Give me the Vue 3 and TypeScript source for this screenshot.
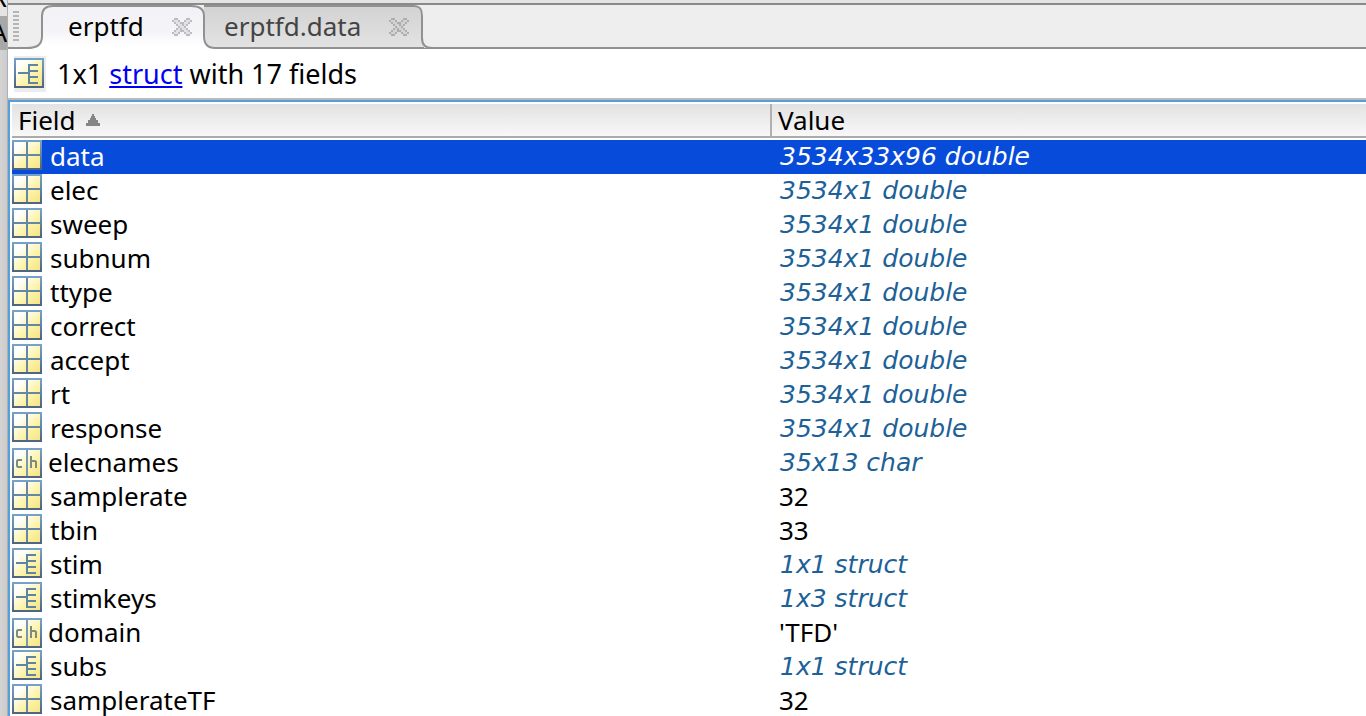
<script setup lang="ts">
import { ref } from 'vue'

type Kind = 'matrix' | 'char' | 'struct'
interface Field {
  name: string
  value: string
  kind: Kind
  summary: boolean
}

const matrix = (name: string, value: string, summary = true): Field => ({ name, value, kind: 'matrix', summary })

const fields: Field[] = [
  matrix('data', '3534x33x96 double'),
  matrix('elec', '3534x1 double'),
  matrix('sweep', '3534x1 double'),
  matrix('subnum', '3534x1 double'),
  matrix('ttype', '3534x1 double'),
  matrix('correct', '3534x1 double'),
  matrix('accept', '3534x1 double'),
  matrix('rt', '3534x1 double'),
  matrix('response', '3534x1 double'),
  { name: 'elecnames', value: '35x13 char', kind: 'char', summary: true },
  matrix('samplerate', '32', false),
  matrix('tbin', '33', false),
  { name: 'stim', value: '1x1 struct', kind: 'struct', summary: true },
  { name: 'stimkeys', value: '1x3 struct', kind: 'struct', summary: true },
  { name: 'domain', value: "'TFD'", kind: 'char', summary: false },
  { name: 'subs', value: '1x1 struct', kind: 'struct', summary: true },
  matrix('samplerateTF', '32', false),
]

const selected = ref('data')

// Close mark on a 10x9 grid: "x" is the outline, "o" the inside.
const closeBitmap = [
  '.xx....xx.',
  'xoox..xoox',
  '.xooxxoox.',
  '..xooxox..',
  '...xoox...',
  '..xoxoox..',
  '.xooxxoox.',
  'xoox..xoox',
  '.xx....xx.',
]
const cells = (mark: string): string =>
  closeBitmap
    .flatMap((row, y) => [...row].map((c, x) => (c === mark ? `M${x} ${y}h1v1h-1z` : '')))
    .join('')
const closeOutline = cells('x')
const closeInside = cells('o')
</script>

<template>
  <div class="window">
    <svg class="defs" width="0" height="0" aria-hidden="true">
      <defs>
        <linearGradient id="cell" x1="0" y1="0" x2="1" y2="1">
          <stop offset="0.2" stop-color="#ffffff" />
          <stop offset="0.6" stop-color="#fdf3a8" />
          <stop offset="1" stop-color="#f5e382" />
        </linearGradient>
        <linearGradient id="edge" x1="0" y1="0" x2="0" y2="1">
          <stop offset="0" stop-color="#76a1c8" />
          <stop offset="1" stop-color="#4e6584" />
        </linearGradient>
        <linearGradient id="front" x1="0" y1="0" x2="0" y2="1">
          <stop offset="0" stop-color="#f2f2f6" />
          <stop offset="0.6" stop-color="#f5f5f8" />
          <stop offset="0.9" stop-color="#ffffff" />
        </linearGradient>
        <linearGradient id="back" x1="0" y1="0" x2="0" y2="1">
          <stop offset="0" stop-color="#d2d2d2" />
          <stop offset="1" stop-color="#e3e3e3" />
        </linearGradient>
      </defs>
    </svg>

    <aside class="behind" aria-hidden="true">
      <span class="behind-top">R</span>
      <span class="behind-bar">A</span>
    </aside>

    <main class="panel">
      <nav class="tabs">
        <span class="grip"></span>
        <button class="tab active" type="button">
          <svg class="shape" width="188" height="45" viewBox="0 0 188 45" aria-hidden="true">
            <path d="M0 43C10 43 15 40 15 31V11C15 4 19 1 26 1H164C172 1 177 4 177 11V31C177 40 181 43 188 43V45H0Z" fill="url(#front)" />
            <path d="M0 43C10 43 15 40 15 31V11C15 4 19 1 26 1H164C172 1 177 4 177 11V31C177 40 181 43 188 43" fill="none" stroke="#919191" stroke-width="2" />
          </svg>
          <span class="label">erptfd</span>
          <svg class="close" width="20" height="18" viewBox="0 0 10 9" shape-rendering="crispEdges" aria-hidden="true">
            <path :d="closeOutline" fill="#bcbcbe" />
            <path :d="closeInside" fill="#e2e2e5" />
          </svg>
        </button>
        <button class="tab" type="button">
          <svg class="shape" width="230" height="45" viewBox="0 0 230 45" aria-hidden="true">
            <path d="M0 1H210C216 1 218 4 218 11V33C218 40 221 43 228 43H10C2 43 0 39 0 31Z" fill="url(#back)" />
            <path d="M-4 1H210C216 1 218 4 218 11V33C218 40 221 43 228 43H230" fill="none" stroke="#919191" stroke-width="2" />
            <path d="M8 43H220" stroke="#919191" stroke-width="2" />
          </svg>
          <span class="label">erptfd.data</span>
          <svg class="close" width="20" height="18" viewBox="0 0 10 9" shape-rendering="crispEdges" aria-hidden="true">
            <path :d="closeOutline" fill="#aeaeae" />
            <path :d="closeInside" fill="#d2d2d2" />
          </svg>
        </button>
      </nav>

      <header class="info">
        <span class="info-icon">
          <svg width="30" height="30" viewBox="0 0 30 30" aria-hidden="true">
            <rect x="1" y="1" width="28" height="28" fill="url(#cell)" stroke="url(#edge)" stroke-width="2" />
            <path d="M4 15H15M24 7H15V25H24M15 13H24M15 19H24" fill="none" stroke="#5f85a5" stroke-width="2" />
          </svg>
        </span>
        <p>1x1 <a href="#struct">struct</a> with 17 fields</p>
      </header>

      <section class="grid">
        <table>
          <colgroup>
            <col class="col-field" />
            <col />
          </colgroup>
          <thead>
            <tr>
              <th scope="col">
                Field<svg class="sort" width="14" height="12" viewBox="0 0 14 12" aria-hidden="true">
                  <path d="M6 0H8V2H9V4H10V6H12V9H14V12H0V9H2V6H4V4H5V2H6Z" fill="#858585" />
                </svg>
              </th>
              <th scope="col">Value</th>
            </tr>
          </thead>
          <tbody>
            <tr
              v-for="field in fields"
              :key="field.name"
              :class="{ selected: selected === field.name }"
              @click="selected = field.name"
            >
              <td>
                <div class="name" :class="field.kind">
                  <svg width="30" height="30" viewBox="0 0 30 30" aria-hidden="true">
                    <rect x="1" y="1" width="28" height="28" fill="url(#cell)" stroke="url(#edge)" stroke-width="2" />
                    <path v-if="field.kind === 'matrix'" d="M15 2V28M2 15H28" stroke="#6487a7" stroke-width="2" />
                    <path v-else-if="field.kind === 'struct'" d="M4 15H15M24 7H15V25H24M15 13H24M15 19H24" fill="none" stroke="#5f85a5" stroke-width="2" />
                    <g v-else fill="none" stroke-width="2">
                      <path d="M15 2V28" stroke="#7399b5" />
                      <path d="M10 12H6L5 13V18L6 19H10M19 8V20M19 13H23L24 14V20" stroke="#7e8b80" />
                    </g>
                  </svg>
                  <span>{{ field.name }}</span>
                </div>
              </td>
              <td class="value" :class="{ summary: field.summary }">{{ field.value }}</td>
            </tr>
          </tbody>
        </table>
      </section>
    </main>
  </div>
</template>

<style>
body {
  margin: 0;
  overflow: hidden;
}
</style>

<style scoped>
.window {
  display: flex;
  height: 100vh;
  overflow: hidden;
  background: #fff;
  color: #000;
  font: 26px/32px "Noto Sans", "Open Sans", sans-serif;
}
.defs {
  position: absolute;
}
.behind {
  flex: 0 0 8px;
  box-sizing: border-box;
  overflow: hidden;
  background: linear-gradient(90deg, #d4d4d4, #cccccc);
  border-right: 1px solid #b0b0b0;
}
.behind span {
  display: flex;
  justify-content: flex-end;
  align-items: flex-end;
}
.behind-top {
  height: 13px;
  padding-bottom: 3px;
  background: #e4e4e4;
}
.behind-bar {
  height: 32px;
  padding-bottom: 2px;
  background: #a8a8a8;
}
.panel {
  flex: 1;
  min-width: 0;
  background: #fff;
}
.tabs {
  display: flex;
  height: 50px;
  box-sizing: border-box;
  padding-top: 5px;
  background:
    linear-gradient(#919191, #919191) 0 47px / 100% 2px no-repeat,
    linear-gradient(#8a8a8a, #8a8a8a) 0 3px / 100% 2px no-repeat,
    linear-gradient(#e4e4e4, #e4e4e4) 0 0 / 100% 3px no-repeat,
    linear-gradient(#eeeeee, #eeeeee) 0 5px / 100% 43px no-repeat;
}
.grip {
  width: 6px;
  height: 30px;
  margin: 6px 0 0 5px;
  background: repeating-linear-gradient(#b4b4b4 0 2px, transparent 2px 4px);
}
.tab {
  position: relative;
  display: flex;
  align-items: center;
  gap: 28px;
  height: 44px;
  margin: 0;
  padding: 0 0 0 20px;
  border: 0;
  background: none;
  color: #444;
  font: inherit;
}
.tab.active {
  z-index: 1;
  width: 177px;
  margin-left: 8px;
  padding-left: 41px;
  color: #000;
}
.shape {
  position: absolute;
  left: 0;
  top: 0;
}
.label,
.close {
  position: relative;
}
.label {
  padding-bottom: 2px;
}
.info {
  display: flex;
  align-items: flex-start;
  gap: 11px;
  height: 50px;
  padding: 6px 0 0 6px;
  box-sizing: border-box;
  border-bottom: 2px solid #b9b9b9;
}
.info-icon {
  display: block;
  width: 32px;
  height: 36px;
  box-sizing: border-box;
  padding-top: 2px;
  background: #ececec;
}
.info-icon svg {
  display: block;
}
.info p {
  margin: 2px 0 0;
  font-size: 27px;
}
.info a {
  color: #0000f5;
}
.grid {
  border: solid #559fdd;
  border-width: 2px 0 0 2px;
  padding: 2px 0 0 2px;
}
table {
  width: 100%;
  table-layout: fixed;
  border-collapse: separate;
  border-spacing: 0;
}
.col-field {
  width: 760px;
}
th {
  height: 34px;
  box-sizing: border-box;
  padding: 0 0 0 6px;
  border-bottom: 2px solid #ababab;
  background: linear-gradient(#e2e2e2, #f8f8f8);
  text-align: left;
  font-weight: 400;
}
th:first-child {
  border-right: 2px solid #b0b0b0;
}
tbody::before {
  content: "";
  display: block;
  height: 2px;
}
.sort {
  margin-left: 10px;
  vertical-align: 4px;
}
td {
  height: 34px;
  padding: 0;
  vertical-align: top;
  white-space: nowrap;
}
.name {
  display: flex;
  align-items: flex-start;
  gap: 8px;
}
.name.char {
  gap: 6px;
}
.name svg {
  display: block;
}
.name.char svg {
  margin-top: 2px;
}
.value {
  padding-left: 7px;
}
.value.summary {
  padding-left: 8px;
  color: #1d6197;
  font-family: "DejaVu Sans", sans-serif;
  font-size: 25px;
  line-height: 34px;
  font-style: italic;
}
.selected td,
.selected .value.summary {
  background: #074bdb;
  color: #fff;
}
</style>
